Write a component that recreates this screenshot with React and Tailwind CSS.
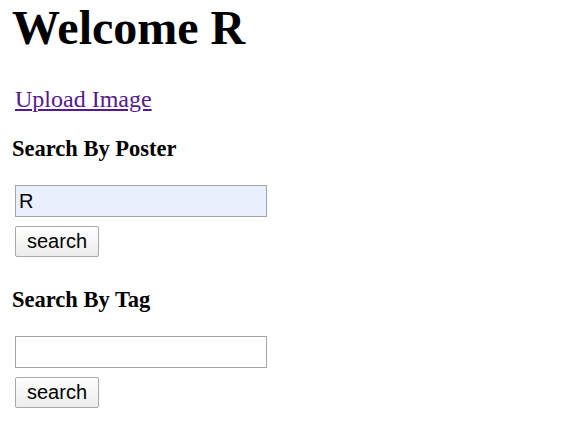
import React from "react";

const serif = "font-['Liberation_Serif','Times_New_Roman',serif]";
const sans = "font-['Liberation_Sans',Arial,sans-serif]";

const SearchBlock = ({ title, value, bg, top }) => {
  return (
    <div>
      <h4 className={`${serif} ${top} text-[22.5px] leading-[26px] font-bold text-black`}>
        {title}
      </h4>
      <input
        type="text"
        defaultValue={value}
        className={`${sans} block mt-[23px] ml-[3px] w-[252px] h-[32px] px-[3px] text-[20px] text-black border border-[#a5a5a5] outline-none ${bg}`}
      />
      <button
        className={`${sans} block mt-[9px] ml-[3px] h-[31px] px-[11px] text-[20px] leading-[23px] text-black border border-[#a9a9a9] rounded-[2px] bg-gradient-to-b from-white to-[#ececec]`}
      >
        search
      </button>
    </div>
  );
};

const App = () => {
  return (
    <div className="w-[580px] h-[426px] bg-white px-3 overflow-hidden">
      <h1 className={`${serif} text-[48px] leading-[55px] font-bold text-black`}>
        Welcome R
      </h1>
      <div className={`${serif} mt-[30px] ml-[3px] text-[24px] leading-[28px]`}>
        <a href="#" className="text-[#551a8b] underline">
          Upload Image
        </a>
      </div>
      <SearchBlock title="Search By Poster" value="R" bg="bg-[#e8f0fe]" top="mt-[23px]" />
      <SearchBlock title="Search By Tag" value="" bg="bg-white" top="mt-[30px]" />
    </div>
  );
};

export default App;
